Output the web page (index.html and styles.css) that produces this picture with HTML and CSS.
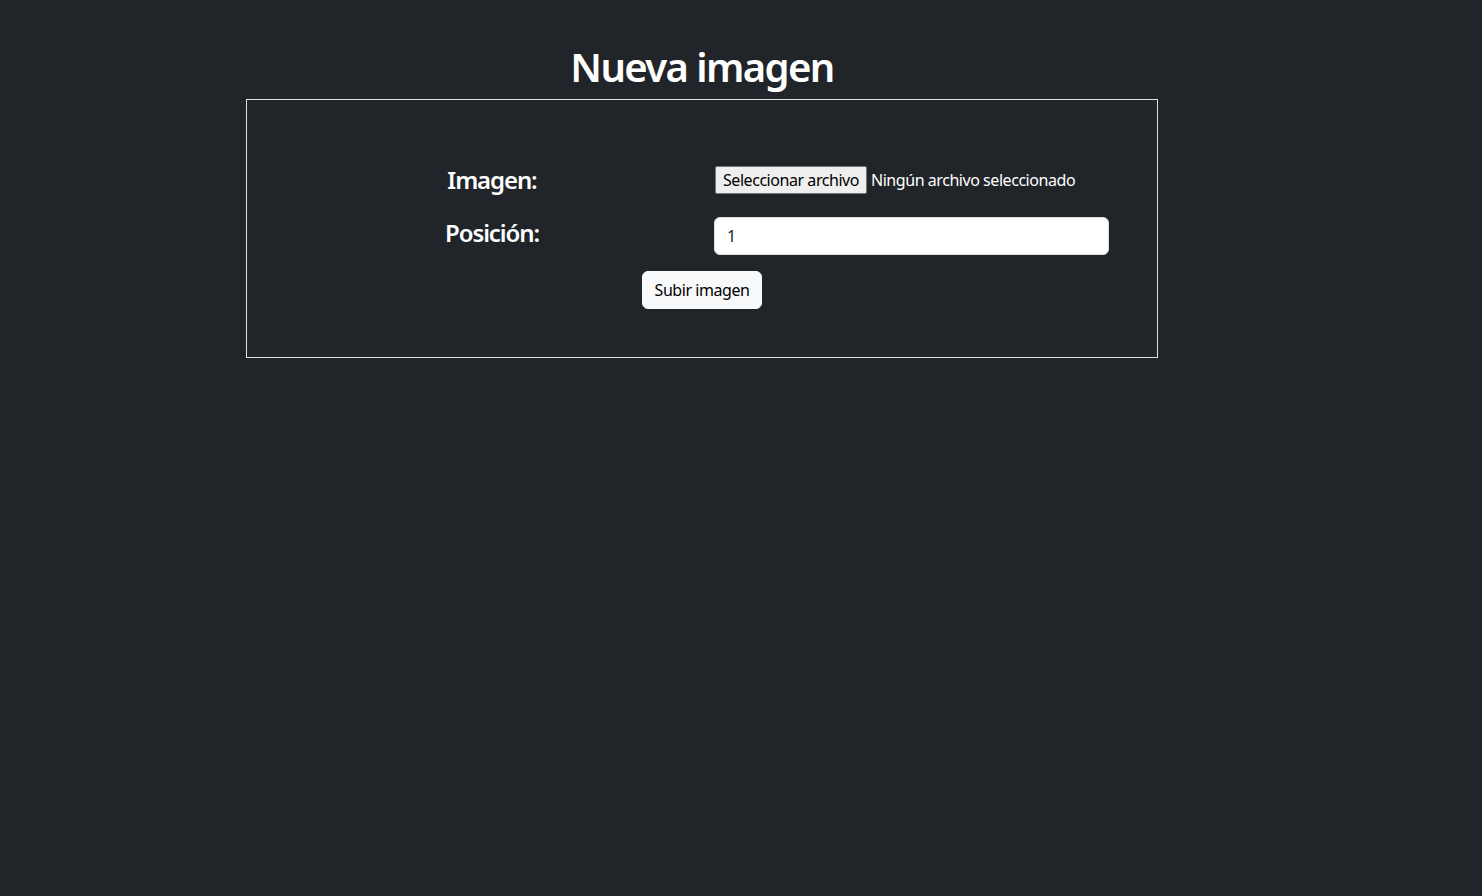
FILE: index.html
```html
<!DOCTYPE html>
<html lang="es">
<head>
<meta charset="utf-8">
<title>Nueva imagen</title>
<link rel="stylesheet" href="styles.css">
</head>
<body>
<main class="page">
  <section class="panel">
    <h1 class="title">Nueva imagen</h1>
    <form class="card">
      <div class="row row-file">
        <label class="label">Imagen:</label>
        <div class="field file">
          <span class="file-btn">Seleccionar archivo</span>
          <span class="file-name">Ningún archivo seleccionado</span>
        </div>
      </div>
      <div class="row row-pos">
        <label class="label label-pos">Posición:</label>
        <div class="field">
          <input class="input" type="text" value="1">
        </div>
      </div>
      <div class="actions">
        <button class="btn" type="button">Subir imagen</button>
      </div>
    </form>
  </section>
</main>
</body>
</html>
```

FILE: styles.css
```css
* { box-sizing: border-box; }
html, body {
  margin: 0;
  background: #212529;
  color: #fff;
  font-family: "Noto Sans", "Open Sans", sans-serif;
  font-size: 16px;
  letter-spacing: -0.45px;
}
body { min-height: 896px; }
.page {
  padding: 43px 0 0 246px;
}
.panel {
  width: 912px;
}
.title {
  margin: 0 0 8px;
  text-align: center;
  font-size: 40px;
  line-height: 48px;
  font-weight: 600;
  letter-spacing: -1.6px;
}
.card {
  border: 1px solid #dee2e6;
  padding: 48px 47px;
}
.row {
  display: grid;
  grid-template-columns: 396px 396px;
  column-gap: 24px;
}
.row-file {
  margin-top: 17px;
  align-items: center;
  height: 28px;
}
.row-pos {
  margin-top: 24px;
  align-items: start;
}
.label {
  text-align: center;
  font-size: 24px;
  line-height: 29px;
  font-weight: 600;
  letter-spacing: -1.1px;
}
.label-pos { margin-top: 1px; }
.file {
  display: flex;
  align-items: center;
  gap: 4px;
  padding-left: 1px;
}
.file-btn {
  display: inline-block;
  height: 28px;
  line-height: 26px;
  padding: 0 7px;
  background: #efefef;
  color: #000;
  border: 1px solid #767676;
  border-radius: 2px;
  font-size: 16px;
  white-space: nowrap;
}
.file-name {
  white-space: nowrap;
}
.input {
  display: block;
  width: 395px;
  height: 38px;
  padding: 6px 12px;
  background: #fff;
  color: #212529;
  border: 1px solid #dee2e6;
  border-radius: 6px;
  font-family: inherit;
  font-size: 16px;
  outline: none;
}
.actions {
  margin-top: 16px;
  display: flex;
  justify-content: center;
}
.btn {
  height: 38px;
  padding: 6px 12px;
  background: #f8f9fa;
  color: #000;
  border: 1px solid #f8f9fa;
  border-radius: 6px;
  font-family: inherit;
  font-size: 16px;
  line-height: 24px;
  letter-spacing: -0.45px;
}
```
